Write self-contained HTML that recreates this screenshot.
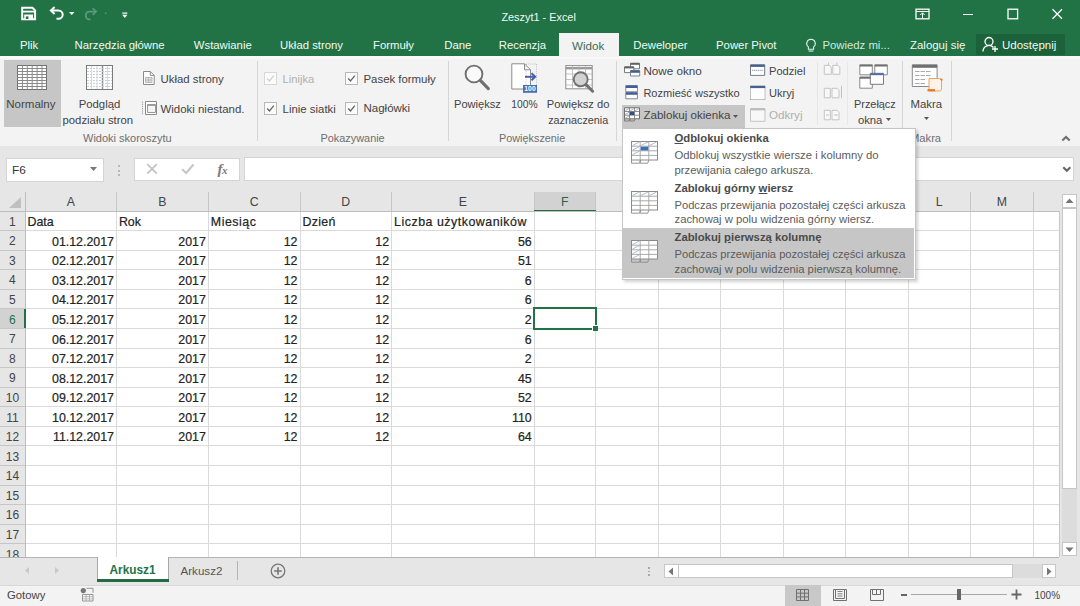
<!DOCTYPE html>
<html><head><meta charset="utf-8"><style>
html,body{margin:0;padding:0;}
body{width:1080px;height:606px;position:relative;overflow:hidden;background:#e6e6e6;font-family:"Liberation Sans", sans-serif;}
.t{position:absolute;white-space:nowrap;}
.r{position:absolute;display:block;}
u{text-decoration:underline;text-underline-offset:1px;}
</style></head><body>
<div class="r" style="left:0.00px;top:0.00px;width:1080.00px;height:56.00px;background:#217346"></div>
<svg class="r" style="left:18px;top:4px" width="22" height="20" viewBox="18 4 22 20"><path d="M22.2 7.7h10.3l2.6 2.6v9h-12.9z" fill="none" stroke="#fff" stroke-width="2"/><path d="M22.2 11.6h12.9" stroke="#fff" stroke-width="1.8"/><path d="M24.2 14.5h8.9v4.8h-8.9z" fill="#fff"/><path d="M25.8 16.4h2.6v2.6h-2.6z" fill="#217346"/></svg>
<svg class="r" style="left:46px;top:4px" width="34" height="20" viewBox="46 4 34 20"><path d="M54.6 6.9L50.9 10.4L54.6 13.9" fill="none" stroke="#fff" stroke-width="2"/><path d="M51.5 10.4H58.5A4.2 4.2 0 0 1 58.5 18.8H56.5" fill="none" stroke="#fff" stroke-width="2"/><path d="M69 12h5.5l-2.75 2.9z" fill="#fff"/></svg>
<svg class="r" style="left:80px;top:4px" width="32" height="20" viewBox="80 4 32 20"><path d="M92.6 8.4L96.2 11.6L92.6 14.8" fill="none" stroke="#5a9a77" stroke-width="1.7"/><path d="M95.6 11.6H89A3.9 3.9 0 0 0 89 19.3H90.5" fill="none" stroke="#5a9a77" stroke-width="1.7"/><circle cx="105.7" cy="13.2" r="1" fill="#4f8f6c"/></svg>
<svg class="r" style="left:118px;top:8px" width="14" height="14" viewBox="118 8 14 14"><path d="M122.3 13.1h5" stroke="#fff" stroke-width="1.2"/><path d="M122.2 14.8h5.2l-2.6 3.3z" fill="#fff"/></svg>
<div class="t" style="left:501.40px;top:12.17px;font-size:10.9px;line-height:10.9px;color:#f2f9f4;">Zeszyt1 - Excel</div>
<svg class="r" style="left:915px;top:8px;" width="15" height="12" viewBox="0 0 15 12"><rect x="1" y="1.2" width="13" height="9.6" fill="none" stroke="#fff" stroke-width="1.3"/><path d="M1 3.5h13" stroke="#fff" stroke-width="1"/><path d="M7.5 10v-5M5.3 7l2.2-2.2 2.2 2.2" fill="none" stroke="#fff" stroke-width="1"/></svg>
<div class="r" style="left:963.00px;top:13.60px;width:10.00px;height:1.30px;background:#fff"></div>
<svg class="r" style="left:1007px;top:8px;" width="12" height="12" viewBox="0 0 12 12"><rect x="1" y="1.2" width="9.6" height="9.6" fill="none" stroke="#fff" stroke-width="1.3"/></svg>
<svg class="r" style="left:1051px;top:8px;" width="13" height="12" viewBox="0 0 13 12"><path d="M1.5 1.2l9.5 9.6M11 1.2l-9.5 9.6" stroke="#fff" stroke-width="1.3"/></svg>
<div class="r" style="left:559.00px;top:33.00px;width:60.00px;height:23.50px;background:#f3f3f3"></div>
<div class="t" style="left:20.00px;top:39.89px;font-size:11.35px;line-height:11.35px;color:#f2f9f4;">Plik</div>
<div class="t" style="left:74.50px;top:39.89px;font-size:11.35px;line-height:11.35px;color:#f2f9f4;">Narzędzia główne</div>
<div class="t" style="left:193.75px;top:39.89px;font-size:11.35px;line-height:11.35px;color:#f2f9f4;">Wstawianie</div>
<div class="t" style="left:280.00px;top:39.89px;font-size:11.35px;line-height:11.35px;color:#f2f9f4;">Układ strony</div>
<div class="t" style="left:373.00px;top:39.89px;font-size:11.35px;line-height:11.35px;color:#f2f9f4;">Formuły</div>
<div class="t" style="left:444.25px;top:39.89px;font-size:11.35px;line-height:11.35px;color:#f2f9f4;">Dane</div>
<div class="t" style="left:498.75px;top:39.89px;font-size:11.35px;line-height:11.35px;color:#f2f9f4;">Recenzja</div>
<div class="t" style="left:633.25px;top:39.89px;font-size:11.35px;line-height:11.35px;color:#f2f9f4;">Deweloper</div>
<div class="t" style="left:716.00px;top:39.89px;font-size:11.35px;line-height:11.35px;color:#f2f9f4;">Power Pivot</div>
<div class="t" style="left:572.00px;top:39.68px;font-size:11.6px;line-height:11.6px;color:#3f6b55;">Widok</div>
<svg class="r" style="left:805px;top:38px;" width="12" height="15" viewBox="0 0 12 15"><path d="M6 1.2a4.3 4.3 0 0 0-2.6 7.7v2.3h5.2v-2.3a4.3 4.3 0 0 0-2.6-7.7z" fill="none" stroke="#dfeee5" stroke-width="1.1"/><path d="M3.6 13h4.8" stroke="#dfeee5" stroke-width="1.1"/></svg>
<div class="t" style="left:822.40px;top:39.89px;font-size:11.35px;line-height:11.35px;color:#d2e6da;">Powiedz mi...</div>
<div class="t" style="left:910.00px;top:39.81px;font-size:11.45px;line-height:11.45px;color:#f2f9f4;">Zaloguj się</div>
<div class="r" style="left:976.00px;top:34.00px;width:88.50px;height:20.50px;background:#1b6139"></div>
<svg class="r" style="left:982px;top:36px;" width="17" height="17" viewBox="0 0 17 17"><circle cx="7" cy="5.5" r="4" fill="none" stroke="#fff" stroke-width="1.3"/><path d="M1 15.5a6 6 0 0 1 10.5-4" fill="none" stroke="#fff" stroke-width="1.3"/><path d="M13 10v6M10 13h6" stroke="#fff" stroke-width="1.3"/></svg>
<div class="t" style="left:1002.00px;top:39.77px;font-size:11.5px;line-height:11.5px;color:#f2f9f4;">Udostępnij</div>
<div class="r" style="left:0.00px;top:56.00px;width:1080.00px;height:90.00px;background:#f3f3f3;border-bottom:1px solid #d5d5d5"></div>
<div class="r" style="left:0.00px;top:56.00px;width:1080.00px;height:3.00px;background:#f7f8f7"></div>
<div class="r" style="left:559.00px;top:56.00px;width:60.00px;height:1.00px;background:#f3f3f3"></div>
<div class="r" style="left:256.70px;top:61.00px;width:1.00px;height:80.00px;background:#d6d6d6"></div>
<div class="r" style="left:447.60px;top:61.00px;width:1.00px;height:80.00px;background:#d6d6d6"></div>
<div class="r" style="left:616.00px;top:61.00px;width:1.00px;height:80.00px;background:#d6d6d6"></div>
<div class="r" style="left:817.40px;top:62.00px;width:1.00px;height:63.00px;background:#e6e6e6"></div>
<div class="r" style="left:846.50px;top:62.00px;width:1.00px;height:63.00px;background:#e8e8e8"></div>
<div class="r" style="left:901.60px;top:61.00px;width:1.00px;height:80.00px;background:#d6d6d6"></div>
<div class="r" style="left:951.30px;top:61.00px;width:1.00px;height:80.00px;background:#d6d6d6"></div>
<div class="r" style="left:3.50px;top:60.00px;width:57.00px;height:67.00px;background:#c6c6c6"></div>
<svg class="r" style="left:15px;top:63px" width="34" height="29" viewBox="15 63 34 29"><rect x="17.5" y="65.5" width="29" height="24" fill="#fff" stroke="#707070"/><path d="M22.40 65.5V89.5" stroke="#8a8a8a" stroke-width="1"/><path d="M27.30 65.5V89.5" stroke="#8a8a8a" stroke-width="1"/><path d="M32.20 65.5V89.5" stroke="#8a8a8a" stroke-width="1"/><path d="M37.10 65.5V89.5" stroke="#8a8a8a" stroke-width="1"/><path d="M42.00 65.5V89.5" stroke="#8a8a8a" stroke-width="1"/><path d="M17.5 68.50H46.5" stroke="#8a8a8a" stroke-width="1"/><path d="M17.5 71.50H46.5" stroke="#8a8a8a" stroke-width="1"/><path d="M17.5 74.50H46.5" stroke="#8a8a8a" stroke-width="1"/><path d="M17.5 77.50H46.5" stroke="#8a8a8a" stroke-width="1"/><path d="M17.5 80.50H46.5" stroke="#8a8a8a" stroke-width="1"/><path d="M17.5 83.50H46.5" stroke="#8a8a8a" stroke-width="1"/><path d="M17.5 86.50H46.5" stroke="#8a8a8a" stroke-width="1"/></svg>
<div class="t" style="left:6.30px;top:98.97px;font-size:11.5px;line-height:11.5px;color:#444;">Normalny</div>
<svg class="r" style="left:84px;top:63px" width="31" height="29" viewBox="84 63 31 29"><rect x="86.5" y="65.5" width="26" height="24" fill="#fff" stroke="#7a7a7a"/><path d="M102.5 65.5v24" stroke="#8a8a8a" stroke-width="1.4"/><path d="M87 68.5h25" stroke="#c4cbd6" stroke-width="0.9" stroke-dasharray="2 1"/><path d="M87 71.5h25" stroke="#c4cbd6" stroke-width="0.9" stroke-dasharray="2 1"/><path d="M87 74.5h25" stroke="#c4cbd6" stroke-width="0.9" stroke-dasharray="2 1"/><path d="M87 77.5h25" stroke="#c4cbd6" stroke-width="0.9" stroke-dasharray="2 1"/><path d="M87 80.5h25" stroke="#c4cbd6" stroke-width="0.9" stroke-dasharray="2 1"/><path d="M87 83.5h25" stroke="#c4cbd6" stroke-width="0.9" stroke-dasharray="2 1"/><path d="M87 86.5h25" stroke="#c4cbd6" stroke-width="0.9" stroke-dasharray="2 1"/><path d="M91.5 66v23M97 66v23M107.5 66v23" stroke="#d0d5dd" stroke-width="0.9"/></svg>
<div class="t" style="left:78.70px;top:99.09px;font-size:11.35px;line-height:11.35px;color:#444;">Podgląd</div>
<div class="t" style="left:62.50px;top:114.89px;font-size:11.35px;line-height:11.35px;color:#444;">podziału stron</div>
<svg class="r" style="left:140px;top:69px" width="18" height="19" viewBox="140 69 18 19"><path d="M143.5 71.5H150.3L154.2 75.4V84.5H143.5Z" fill="#fff" stroke="#8a8a8a"/><path d="M150.3 71.5V75.4H154.2" fill="none" stroke="#8a8a8a"/><path d="M145.5 77.5h6.5v5h-6.5z" fill="#e4e4e4" stroke="#aaa" stroke-width="0.8"/><path d="M145.5 80h6.5M148.7 77.5v5" stroke="#aaa" stroke-width="0.8"/></svg>
<div class="t" style="left:160.50px;top:73.65px;font-size:11.4px;line-height:11.4px;color:#444;">Układ strony</div>
<svg class="r" style="left:140px;top:99px" width="19" height="18" viewBox="140 99 19 18"><path d="M142.5 101.5V115" stroke="#999" stroke-dasharray="1.2 1"/><path d="M145.5 101.5h11v13h-11z" fill="#fff" stroke="#8a8a8a"/><path d="M147.5 104.5h8v8h-8z" fill="#f4f4f4" stroke="#999"/><path d="M147.5 105.2h8" stroke="#999" stroke-width="1.4"/></svg>
<div class="t" style="left:160.50px;top:103.51px;font-size:11.45px;line-height:11.45px;color:#444;">Widoki niestand.</div>
<div class="t" style="left:83.00px;top:132.59px;font-size:11.0px;line-height:11.0px;color:#6e6e6e;">Widoki skoroszytu</div>
<svg class="r" style="left:264px;top:72px;" width="13" height="13" viewBox="0 0 13 13"><rect x="0.5" y="0.5" width="12" height="12" fill="#fbfbfb" stroke="#d8d8d8"/><path d="M3.2 6.5l2.3 2.5 4.3-5.3" fill="none" stroke="#d0d0d0" stroke-width="1.3"/></svg>
<div class="t" style="left:282.60px;top:73.82px;font-size:11.2px;line-height:11.2px;color:#b0b0b0;">Linijka</div>
<svg class="r" style="left:345px;top:72px;" width="13" height="13" viewBox="0 0 13 13"><rect x="0.5" y="0.5" width="12" height="12" fill="#fbfbfb" stroke="#b8b8b8"/><path d="M3.2 6.5l2.3 2.5 4.3-5.3" fill="none" stroke="#666" stroke-width="1.3"/></svg>
<div class="t" style="left:363.50px;top:73.65px;font-size:11.4px;line-height:11.4px;color:#444;">Pasek formuły</div>
<svg class="r" style="left:264px;top:101.5px;" width="13" height="13" viewBox="0 0 13 13"><rect x="0.5" y="0.5" width="12" height="12" fill="#fbfbfb" stroke="#b8b8b8"/><path d="M3.2 6.5l2.3 2.5 4.3-5.3" fill="none" stroke="#666" stroke-width="1.3"/></svg>
<div class="t" style="left:282.60px;top:103.55px;font-size:11.4px;line-height:11.4px;color:#444;">Linie siatki</div>
<svg class="r" style="left:345px;top:101.5px;" width="13" height="13" viewBox="0 0 13 13"><rect x="0.5" y="0.5" width="12" height="12" fill="#fbfbfb" stroke="#b8b8b8"/><path d="M3.2 6.5l2.3 2.5 4.3-5.3" fill="none" stroke="#666" stroke-width="1.3"/></svg>
<div class="t" style="left:363.50px;top:103.47px;font-size:11.5px;line-height:11.5px;color:#444;">Nagłówki</div>
<div class="t" style="left:320.50px;top:133.07px;font-size:10.9px;line-height:10.9px;color:#6e6e6e;">Pokazywanie</div>
<svg class="r" style="left:460px;top:60px" width="34" height="34" viewBox="460 60 34 34"><circle cx="474" cy="74" r="8.4" fill="#fafafa" stroke="#707070" stroke-width="1.9"/><path d="M480.3 80.3L488.3 88.6" stroke="#707070" stroke-width="3.2" stroke-linecap="round"/></svg>
<div class="t" style="left:454.00px;top:99.30px;font-size:11.1px;line-height:11.1px;color:#444;">Powiększ</div>
<svg class="r" style="left:508px;top:60px" width="32" height="35" viewBox="508 60 32 35"><path d="M511.8 63.8H524.5L530.5 69.8V89H511.8Z" fill="#fff" stroke="#8c8c8c"/><path d="M524.5 63.8V69.8H530.5" fill="none" stroke="#8c8c8c"/><path d="M526 64v24M536.5 64v21" stroke="#b0b0b0" stroke-width="0.8" stroke-dasharray="1 1.2"/><path d="M526 64h10.5" stroke="#b0b0b0" stroke-width="0.8" stroke-dasharray="1 1.2"/><path d="M525 76.8H535" stroke="#3e5fae" stroke-width="1.9"/><path d="M531.5 73.3L535.2 76.8L531.5 80.3" fill="none" stroke="#3e5fae" stroke-width="1.9"/><rect x="523" y="85" width="14" height="7.8" fill="#4a6fb5"/><text x="530" y="91.3" font-size="6.8" font-weight="bold" fill="#fff" text-anchor="middle" font-family="Liberation Sans">100</text></svg>
<div class="t" style="left:511.30px;top:99.98px;font-size:10.3px;line-height:10.3px;color:#444;">100%</div>
<svg class="r" style="left:562px;top:62px" width="35" height="33" viewBox="562 62 35 33"><rect x="565.8" y="65.6" width="26.4" height="23.2" fill="#fff" stroke="#8c8c8c"/><path d="M566 68.2h26" stroke="#9a9a9a" stroke-width="2.4"/><path d="M566 74h26M566 79.5h26M566 85h26M572.5 66v23M579 66v23M585.5 66v23" stroke="#b4b4b4" stroke-width="0.8"/><circle cx="580.7" cy="79.3" r="7" fill="#d2d2d2" stroke="#707070" stroke-width="1.9"/><path d="M586 84.6L592.6 91.2" stroke="#707070" stroke-width="3" stroke-linecap="round"/></svg>
<div class="t" style="left:546.80px;top:99.26px;font-size:11.15px;line-height:11.15px;color:#444;">Powiększ do</div>
<div class="t" style="left:548.20px;top:115.36px;font-size:10.8px;line-height:10.8px;color:#444;">zaznaczenia</div>
<div class="t" style="left:499.00px;top:133.02px;font-size:10.85px;line-height:10.85px;color:#6e6e6e;">Powiększenie</div>
<svg class="r" style="left:622px;top:61px" width="20" height="17" viewBox="622 61 20 17"><path d="M630.5 63.2h9v5.6h-9z" fill="#fff" stroke="#7a7a7a"/><path d="M630.5 63.9h9" stroke="#606060" stroke-width="1.8"/><path d="M624.5 66.8h9.3v5.8h-9.3z" fill="#fff" stroke="#7a7a7a"/><path d="M624.5 67.5h9.3" stroke="#606060" stroke-width="1.8"/><path d="M630.5 70.6h9.2v5.4h-9.2z" fill="#fff" stroke="#7a8596"/><path d="M630.5 71.6h9.2" stroke="#3f5f96" stroke-width="2.4"/></svg>
<div class="t" style="left:643.40px;top:65.10px;font-size:11.7px;line-height:11.7px;color:#444;">Nowe okno</div>
<svg class="r" style="left:623px;top:83px" width="17" height="18" viewBox="623 83 17 18"><path d="M625.8 85.6h11.6v6.2h-11.6z M625.8 92.4h11.6v6.4h-11.6z" fill="#fff" stroke="#7f8794"/><path d="M625.8 86.8h11.6M625.8 93.6h11.6" stroke="#3f5f96" stroke-width="2.4"/></svg>
<div class="t" style="left:643.40px;top:88.45px;font-size:11.05px;line-height:11.05px;color:#444;">Rozmieść wszystko</div>
<div class="r" style="left:621.70px;top:104.60px;width:123.00px;height:23.00px;background:#c6c6c6"></div>
<svg class="r" style="left:622px;top:105px" width="20" height="19" viewBox="622 105 20 19"><path d="M624.5 107.8h15v11h-15z" fill="#fff" stroke="#6e6e6e"/><path d="M624.5 111.5h15M624.5 115.2h15M629.5 107.8v11M634.5 107.8v11" stroke="#808080" stroke-width="0.9"/><path d="M630 111.8h4.2v3.2H630z" fill="#36507e"/><path d="M625 111l4-2.5M630 111l4-2.5M635 111l4-2.5M625 114.7l4-2.5M625 118.4l4-2.5" stroke="#9aa6b8" stroke-width="0.8"/><path d="M624.5 118.8v2.2h4.8l.7-2.2M630 118.8v2.2h4.3l.7-2.2" fill="none" stroke="#777" stroke-width="0.9"/></svg>
<div class="t" style="left:643.40px;top:109.38px;font-size:11.6px;line-height:11.6px;color:#444;">Zablokuj okienka</div>
<svg class="r" style="left:733px;top:115px;" width="6" height="4" viewBox="0 0 6 4"><path d="M0 0h5l-2.5 3z" fill="#555"/></svg>
<svg class="r" style="left:748px;top:62px" width="20" height="17" viewBox="748 62 20 17"><path d="M750.5 64.8h14.2v10.6h-14.2z" fill="#fff" stroke="#737b88"/><path d="M750.5 65.8h14.2" stroke="#46608f" stroke-width="2.2"/><path d="M752.3 70.3h10.8" stroke="#5a7096" stroke-dasharray="1 1"/></svg>
<div class="t" style="left:769.00px;top:65.60px;font-size:11.1px;line-height:11.1px;color:#444;">Podziel</div>
<svg class="r" style="left:748px;top:84px" width="20" height="18" viewBox="748 84 20 18"><path d="M750.5 86.4h14.5v13h-14.5z" fill="#fff" opacity="0.8"/><path d="M750.5 86.5v13M765 86.5v13M750.5 99.5h14.5" stroke="#8a8a8a" stroke-dasharray="1 1" fill="none"/><path d="M750.2 86.9h15" stroke="#46608f" stroke-width="2.4"/></svg>
<div class="t" style="left:769.00px;top:88.40px;font-size:11.1px;line-height:11.1px;color:#444;">Ukryj</div>
<svg class="r" style="left:748px;top:106px" width="20" height="18" viewBox="748 106 20 18"><path d="M750.5 108.5h14.5v12.8h-14.5z" fill="#f8f8f8" stroke="#c4c4c4"/><path d="M750.5 109.4h14.5" stroke="#bdbdbd" stroke-width="2"/></svg>
<div class="t" style="left:769.00px;top:109.38px;font-size:11.6px;line-height:11.6px;color:#b0b0b0;">Odkryj</div>
<svg class="r" style="left:820px;top:60px" width="24" height="64" viewBox="820 60 24 64"><path d="M824.3 65.3h5l2 2v7h-7z M832.8 65.3h5l2 2v7h-7z" fill="#f8f8f8" stroke="#c4c4c4"/><path d="M828.5 62.5v3M836.8 62.5v3" stroke="#c8c8c8"/><path d="M824.3 88.3h6v9.5h-6z M832 88.3h5l2 2v7.5h-7z" fill="#f8f8f8" stroke="#c4c4c4"/><path d="M841.5 86v12" stroke="#c0c0c0"/><path d="M824.3 110.3h6v9.5h-6z M832 110.3h5l2 2v7.5h-7z" fill="#f8f8f8" stroke="#c4c4c4"/><path d="M826 115h3M834 115h4" stroke="#c0c0c0"/></svg>
<svg class="r" style="left:856px;top:61px" width="36" height="31" viewBox="856 61 36 31"><path d="M859.8 64.8h12.5v10h-12.5z M874.8 64.8h12.5v10h-12.5z M859.8 77h12.5v11.2h-12.5z" fill="#fff" stroke="#8a8a8a"/><path d="M859.8 65.6h12.5M874.8 65.6h12.5M859.8 77.8h12.5" stroke="#707070" stroke-width="1.8"/><path d="M870.3 73.3h13.2v11h-13.2z" fill="#fff" stroke="#7a7a7a"/><path d="M870.3 74.2h13.2" stroke="#4a6fa8" stroke-width="2"/></svg>
<div class="t" style="left:854.00px;top:99.47px;font-size:10.9px;line-height:10.9px;color:#444;">Przełącz</div>
<div class="t" style="left:857.90px;top:114.73px;font-size:11.3px;line-height:11.3px;color:#444;">okna</div>
<svg class="r" style="left:886px;top:118px;" width="6" height="4" viewBox="0 0 6 4"><path d="M0 0h5l-2.5 3z" fill="#555"/></svg>
<svg class="r" style="left:909px;top:61px" width="37" height="33" viewBox="909 61 37 33"><path d="M912.3 64.8h24.8v21.7h-24.8z" fill="#fff" stroke="#8a8a8a"/><path d="M912.3 66.3h24.8" stroke="#707070" stroke-width="3"/><path d="M915 71.5h4.5M920.5 71.5h4.5M926 71.5h4.5M915 75.5h4.5M920.5 75.5h4.5M926 75.5h4.5M915 79.5h4.5M920.5 79.5h4.5M915 83.5h4.5M920.5 83.5h4.5" stroke="#a0a0a0" stroke-width="0.9"/><path d="M929 78.5h10.5a2 2 0 0 1 2 2v8.5a2 2 0 0 1-2 2h-10.5z" fill="#fdf3e6" stroke="#e8a567" stroke-width="1"/><path d="M927.5 90.2h7.5" stroke="#e07b29" stroke-width="2.2"/><path d="M940.5 78.8l2 1.5" stroke="#e07b29" stroke-width="1.5"/></svg>
<div class="t" style="left:910.50px;top:99.05px;font-size:11.4px;line-height:11.4px;color:#444;">Makra</div>
<svg class="r" style="left:923.5px;top:117px;" width="6" height="4" viewBox="0 0 6 4"><path d="M0 0h5l-2.5 3z" fill="#555"/></svg>
<div class="t" style="left:910.00px;top:132.72px;font-size:11.2px;line-height:11.2px;color:#6e6e6e;">Makra</div>
<svg class="r" style="left:1058px;top:132px" width="16" height="12" viewBox="1058 132 16 12"><path d="M1062.3 140.6L1066 136.9L1069.7 140.6" fill="none" stroke="#707070" stroke-width="2.1"/></svg>
<div class="r" style="left:0.00px;top:146.00px;width:1080.00px;height:46.00px;background:#e6e6e6"></div>
<div class="r" style="left:5.50px;top:157.50px;width:98.00px;height:24.50px;background:#fff;border:1px solid #d4d4d4;box-sizing:border-box"></div>
<div class="t" style="left:12.00px;top:165.21px;font-size:11.8px;line-height:11.8px;color:#333;">F6</div>
<svg class="r" style="left:90px;top:167px;" width="8" height="5" viewBox="0 0 8 5"><path d="M0 0h7l-3.5 4z" fill="#777"/></svg>
<div class="r" style="left:118.20px;top:165.30px;width:2.00px;height:2.00px;background:#a8a8a8;border-radius:1px"></div>
<div class="r" style="left:118.20px;top:169.50px;width:2.00px;height:2.00px;background:#a8a8a8;border-radius:1px"></div>
<div class="r" style="left:118.20px;top:173.70px;width:2.00px;height:2.00px;background:#a8a8a8;border-radius:1px"></div>
<div class="r" style="left:134.40px;top:157.70px;width:105.90px;height:23.80px;background:#fff;border:1px solid #d4d4d4;box-sizing:border-box"></div>
<svg class="r" style="left:144px;top:160px" width="18" height="19" viewBox="144 160 18 19"><path d="M147.3 164.2l9.5 9.5M156.8 164.2l-9.5 9.5" stroke="#c2c2c2" stroke-width="1.7"/></svg>
<svg class="r" style="left:180px;top:160px" width="16" height="19" viewBox="180 160 16 19"><path d="M182.2 169.2l4 3.8 7.3-8.5" fill="none" stroke="#c6c6c6" stroke-width="2"/></svg>
<div class="t" style="left:217.5px;top:159.5px;font-family:'Liberation Serif',serif;font-style:italic;font-weight:bold;font-size:15px;line-height:18px;color:#7a7a7a">f<span style="font-size:11px;margin-left:-0.5px">x</span></div>
<div class="r" style="left:244.40px;top:157.40px;width:830.00px;height:24.00px;background:#fff;border:1px solid #d4d4d4;box-sizing:border-box"></div>
<svg class="r" style="left:1058px;top:162px" width="16" height="14" viewBox="1058 162 16 14"><path d="M1063.3 167.2L1066.8 170.7L1070.3 167.2" fill="none" stroke="#666" stroke-width="2.1"/></svg>
<div class="r" style="left:0.00px;top:192.00px;width:1059.00px;height:19.00px;background:#e6e6e6"></div>
<div class="r" style="left:0.00px;top:211.00px;width:25.00px;height:346.00px;background:#e6e6e6"></div>
<div class="r" style="left:25.00px;top:211.00px;width:1034.00px;height:346.00px;background:#fff"></div>
<div class="r" style="left:1059.00px;top:192.00px;width:21.00px;height:365.00px;background:#e6e6e6"></div>
<div class="r" style="left:116.00px;top:211.00px;width:1.00px;height:346.00px;background:#dadada"></div>
<div class="r" style="left:116.00px;top:192.00px;width:1.00px;height:19.00px;background:#c6c6c6"></div>
<div class="r" style="left:207.80px;top:211.00px;width:1.00px;height:346.00px;background:#dadada"></div>
<div class="r" style="left:207.80px;top:192.00px;width:1.00px;height:19.00px;background:#c6c6c6"></div>
<div class="r" style="left:299.50px;top:211.00px;width:1.00px;height:346.00px;background:#dadada"></div>
<div class="r" style="left:299.50px;top:192.00px;width:1.00px;height:19.00px;background:#c6c6c6"></div>
<div class="r" style="left:391.10px;top:211.00px;width:1.00px;height:346.00px;background:#dadada"></div>
<div class="r" style="left:391.10px;top:192.00px;width:1.00px;height:19.00px;background:#c6c6c6"></div>
<div class="r" style="left:533.75px;top:211.00px;width:1.00px;height:346.00px;background:#dadada"></div>
<div class="r" style="left:533.75px;top:192.00px;width:1.00px;height:19.00px;background:#c6c6c6"></div>
<div class="r" style="left:595.00px;top:211.00px;width:1.00px;height:346.00px;background:#dadada"></div>
<div class="r" style="left:595.00px;top:192.00px;width:1.00px;height:19.00px;background:#c6c6c6"></div>
<div class="r" style="left:657.50px;top:211.00px;width:1.00px;height:346.00px;background:#dadada"></div>
<div class="r" style="left:657.50px;top:192.00px;width:1.00px;height:19.00px;background:#c6c6c6"></div>
<div class="r" style="left:720.00px;top:211.00px;width:1.00px;height:346.00px;background:#dadada"></div>
<div class="r" style="left:720.00px;top:192.00px;width:1.00px;height:19.00px;background:#c6c6c6"></div>
<div class="r" style="left:782.50px;top:211.00px;width:1.00px;height:346.00px;background:#dadada"></div>
<div class="r" style="left:782.50px;top:192.00px;width:1.00px;height:19.00px;background:#c6c6c6"></div>
<div class="r" style="left:845.00px;top:211.00px;width:1.00px;height:346.00px;background:#dadada"></div>
<div class="r" style="left:845.00px;top:192.00px;width:1.00px;height:19.00px;background:#c6c6c6"></div>
<div class="r" style="left:907.50px;top:211.00px;width:1.00px;height:346.00px;background:#dadada"></div>
<div class="r" style="left:907.50px;top:192.00px;width:1.00px;height:19.00px;background:#c6c6c6"></div>
<div class="r" style="left:970.00px;top:211.00px;width:1.00px;height:346.00px;background:#dadada"></div>
<div class="r" style="left:970.00px;top:192.00px;width:1.00px;height:19.00px;background:#c6c6c6"></div>
<div class="r" style="left:1032.50px;top:211.00px;width:1.00px;height:346.00px;background:#dadada"></div>
<div class="r" style="left:1032.50px;top:192.00px;width:1.00px;height:19.00px;background:#c6c6c6"></div>
<div class="r" style="left:25.00px;top:230.08px;width:1034.00px;height:1.00px;background:#dadada"></div>
<div class="r" style="left:0.00px;top:230.08px;width:25.00px;height:1.00px;background:#c6c6c6"></div>
<div class="r" style="left:25.00px;top:249.66px;width:1034.00px;height:1.00px;background:#dadada"></div>
<div class="r" style="left:0.00px;top:249.66px;width:25.00px;height:1.00px;background:#c6c6c6"></div>
<div class="r" style="left:25.00px;top:269.24px;width:1034.00px;height:1.00px;background:#dadada"></div>
<div class="r" style="left:0.00px;top:269.24px;width:25.00px;height:1.00px;background:#c6c6c6"></div>
<div class="r" style="left:25.00px;top:288.82px;width:1034.00px;height:1.00px;background:#dadada"></div>
<div class="r" style="left:0.00px;top:288.82px;width:25.00px;height:1.00px;background:#c6c6c6"></div>
<div class="r" style="left:25.00px;top:308.40px;width:1034.00px;height:1.00px;background:#dadada"></div>
<div class="r" style="left:0.00px;top:308.40px;width:25.00px;height:1.00px;background:#c6c6c6"></div>
<div class="r" style="left:25.00px;top:327.98px;width:1034.00px;height:1.00px;background:#dadada"></div>
<div class="r" style="left:0.00px;top:327.98px;width:25.00px;height:1.00px;background:#c6c6c6"></div>
<div class="r" style="left:25.00px;top:347.56px;width:1034.00px;height:1.00px;background:#dadada"></div>
<div class="r" style="left:0.00px;top:347.56px;width:25.00px;height:1.00px;background:#c6c6c6"></div>
<div class="r" style="left:25.00px;top:367.14px;width:1034.00px;height:1.00px;background:#dadada"></div>
<div class="r" style="left:0.00px;top:367.14px;width:25.00px;height:1.00px;background:#c6c6c6"></div>
<div class="r" style="left:25.00px;top:386.72px;width:1034.00px;height:1.00px;background:#dadada"></div>
<div class="r" style="left:0.00px;top:386.72px;width:25.00px;height:1.00px;background:#c6c6c6"></div>
<div class="r" style="left:25.00px;top:406.30px;width:1034.00px;height:1.00px;background:#dadada"></div>
<div class="r" style="left:0.00px;top:406.30px;width:25.00px;height:1.00px;background:#c6c6c6"></div>
<div class="r" style="left:25.00px;top:425.88px;width:1034.00px;height:1.00px;background:#dadada"></div>
<div class="r" style="left:0.00px;top:425.88px;width:25.00px;height:1.00px;background:#c6c6c6"></div>
<div class="r" style="left:25.00px;top:445.46px;width:1034.00px;height:1.00px;background:#dadada"></div>
<div class="r" style="left:0.00px;top:445.46px;width:25.00px;height:1.00px;background:#c6c6c6"></div>
<div class="r" style="left:25.00px;top:465.04px;width:1034.00px;height:1.00px;background:#dadada"></div>
<div class="r" style="left:0.00px;top:465.04px;width:25.00px;height:1.00px;background:#c6c6c6"></div>
<div class="r" style="left:25.00px;top:484.62px;width:1034.00px;height:1.00px;background:#dadada"></div>
<div class="r" style="left:0.00px;top:484.62px;width:25.00px;height:1.00px;background:#c6c6c6"></div>
<div class="r" style="left:25.00px;top:504.20px;width:1034.00px;height:1.00px;background:#dadada"></div>
<div class="r" style="left:0.00px;top:504.20px;width:25.00px;height:1.00px;background:#c6c6c6"></div>
<div class="r" style="left:25.00px;top:523.78px;width:1034.00px;height:1.00px;background:#dadada"></div>
<div class="r" style="left:0.00px;top:523.78px;width:25.00px;height:1.00px;background:#c6c6c6"></div>
<div class="r" style="left:25.00px;top:543.36px;width:1034.00px;height:1.00px;background:#dadada"></div>
<div class="r" style="left:0.00px;top:543.36px;width:25.00px;height:1.00px;background:#c6c6c6"></div>
<div class="r" style="left:0.00px;top:210.50px;width:1059.00px;height:1.00px;background:#bdbdbd"></div>
<div class="r" style="left:24.50px;top:192.00px;width:1.00px;height:365.00px;background:#bdbdbd"></div>
<div class="r" style="left:1058.50px;top:211.00px;width:1.00px;height:346.00px;background:#c6c6c6"></div>
<div class="r" style="left:25.00px;top:556.50px;width:1034.00px;height:1.00px;background:#c6c6c6"></div>
<svg class="r" style="left:8px;top:197px;" width="14" height="12" viewBox="0 0 14 12"><path d="M13 0v11H1z" fill="#c0c0c0"/></svg>
<div class="r" style="left:534.75px;top:192.00px;width:60.25px;height:19.00px;background:#d2d2d2"></div>
<div class="r" style="left:534.25px;top:209.60px;width:61.25px;height:1.60px;background:#2a6b48"></div>
<div class="r" style="left:0.00px;top:309.40px;width:24.50px;height:18.58px;background:#d2d2d2"></div>
<div class="r" style="left:23.50px;top:308.90px;width:2.00px;height:19.58px;background:#217346"></div>
<div class="t" style="left:40.75px;width:60px;text-align:center;top:195.59px;font-size:12.3px;line-height:12.3px;color:#444;">A</div>
<div class="t" style="left:132.40px;width:60px;text-align:center;top:195.59px;font-size:12.3px;line-height:12.3px;color:#444;">B</div>
<div class="t" style="left:224.15px;width:60px;text-align:center;top:195.59px;font-size:12.3px;line-height:12.3px;color:#444;">C</div>
<div class="t" style="left:315.80px;width:60px;text-align:center;top:195.59px;font-size:12.3px;line-height:12.3px;color:#444;">D</div>
<div class="t" style="left:432.93px;width:60px;text-align:center;top:195.59px;font-size:12.3px;line-height:12.3px;color:#444;">E</div>
<div class="t" style="left:534.88px;width:60px;text-align:center;top:195.59px;font-size:12.3px;line-height:12.3px;color:#2e5e45;">F</div>
<div class="t" style="left:596.75px;width:60px;text-align:center;top:195.59px;font-size:12.3px;line-height:12.3px;color:#444;">G</div>
<div class="t" style="left:659.25px;width:60px;text-align:center;top:195.59px;font-size:12.3px;line-height:12.3px;color:#444;">H</div>
<div class="t" style="left:721.75px;width:60px;text-align:center;top:195.59px;font-size:12.3px;line-height:12.3px;color:#444;">I</div>
<div class="t" style="left:784.25px;width:60px;text-align:center;top:195.59px;font-size:12.3px;line-height:12.3px;color:#444;">J</div>
<div class="t" style="left:846.75px;width:60px;text-align:center;top:195.59px;font-size:12.3px;line-height:12.3px;color:#444;">K</div>
<div class="t" style="left:909.25px;width:60px;text-align:center;top:195.59px;font-size:12.3px;line-height:12.3px;color:#444;">L</div>
<div class="t" style="left:971.75px;width:60px;text-align:center;top:195.59px;font-size:12.3px;line-height:12.3px;color:#444;">M</div>
<div class="t" style="left:0.40px;width:24px;text-align:center;top:215.74px;font-size:12px;line-height:12px;color:#444;">1</div>
<div class="t" style="left:0.40px;width:24px;text-align:center;top:235.32px;font-size:12px;line-height:12px;color:#444;">2</div>
<div class="t" style="left:0.40px;width:24px;text-align:center;top:254.90px;font-size:12px;line-height:12px;color:#444;">3</div>
<div class="t" style="left:0.40px;width:24px;text-align:center;top:274.48px;font-size:12px;line-height:12px;color:#444;">4</div>
<div class="t" style="left:0.40px;width:24px;text-align:center;top:294.06px;font-size:12px;line-height:12px;color:#444;">5</div>
<div class="t" style="left:0.40px;width:24px;text-align:center;top:313.64px;font-size:12px;line-height:12px;color:#217346;">6</div>
<div class="t" style="left:0.40px;width:24px;text-align:center;top:333.22px;font-size:12px;line-height:12px;color:#444;">7</div>
<div class="t" style="left:0.40px;width:24px;text-align:center;top:352.80px;font-size:12px;line-height:12px;color:#444;">8</div>
<div class="t" style="left:0.40px;width:24px;text-align:center;top:372.38px;font-size:12px;line-height:12px;color:#444;">9</div>
<div class="t" style="left:0.40px;width:24px;text-align:center;top:391.96px;font-size:12px;line-height:12px;color:#444;">10</div>
<div class="t" style="left:0.40px;width:24px;text-align:center;top:411.54px;font-size:12px;line-height:12px;color:#444;">11</div>
<div class="t" style="left:0.40px;width:24px;text-align:center;top:431.12px;font-size:12px;line-height:12px;color:#444;">12</div>
<div class="t" style="left:0.40px;width:24px;text-align:center;top:450.70px;font-size:12px;line-height:12px;color:#444;">13</div>
<div class="t" style="left:0.40px;width:24px;text-align:center;top:470.28px;font-size:12px;line-height:12px;color:#444;">14</div>
<div class="t" style="left:0.40px;width:24px;text-align:center;top:489.86px;font-size:12px;line-height:12px;color:#444;">15</div>
<div class="t" style="left:0.40px;width:24px;text-align:center;top:509.44px;font-size:12px;line-height:12px;color:#444;">16</div>
<div class="t" style="left:0.40px;width:24px;text-align:center;top:529.02px;font-size:12px;line-height:12px;color:#444;">17</div>
<div class="t" style="left:0.40px;width:24px;text-align:center;top:548.60px;font-size:12px;line-height:12px;color:#444;">18</div>
<div class="t" style="left:27.50px;top:215.50px;font-size:12.4px;line-height:12.4px;color:#222;-webkit-text-stroke:0.2px #222;letter-spacing:0px;">Data</div>
<div class="t" style="left:119.00px;top:215.50px;font-size:12.4px;line-height:12.4px;color:#222;-webkit-text-stroke:0.2px #222;letter-spacing:-0.1px;">Rok</div>
<div class="t" style="left:210.80px;top:215.50px;font-size:12.4px;line-height:12.4px;color:#222;-webkit-text-stroke:0.2px #222;letter-spacing:0.53px;">Miesiąc</div>
<div class="t" style="left:302.50px;top:215.50px;font-size:12.4px;line-height:12.4px;color:#222;-webkit-text-stroke:0.2px #222;letter-spacing:0.31px;">Dzień</div>
<div class="t" style="left:394.10px;top:215.50px;font-size:12.4px;line-height:12.4px;color:#222;-webkit-text-stroke:0.2px #222;letter-spacing:0.51px;">Liczba użytkowaników</div>
<div class="t" style="right:966.00px;top:235.68px;font-size:12.4px;line-height:12.4px;color:#222;-webkit-text-stroke:0.2px #222;">01.12.2017</div>
<div class="t" style="right:874.20px;top:235.68px;font-size:12.4px;line-height:12.4px;color:#222;-webkit-text-stroke:0.2px #222;">2017</div>
<div class="t" style="right:782.50px;top:235.68px;font-size:12.4px;line-height:12.4px;color:#222;-webkit-text-stroke:0.2px #222;">12</div>
<div class="t" style="right:690.90px;top:235.68px;font-size:12.4px;line-height:12.4px;color:#222;-webkit-text-stroke:0.2px #222;">12</div>
<div class="t" style="right:548.25px;top:235.68px;font-size:12.4px;line-height:12.4px;color:#222;-webkit-text-stroke:0.2px #222;">56</div>
<div class="t" style="right:966.00px;top:255.26px;font-size:12.4px;line-height:12.4px;color:#222;-webkit-text-stroke:0.2px #222;">02.12.2017</div>
<div class="t" style="right:874.20px;top:255.26px;font-size:12.4px;line-height:12.4px;color:#222;-webkit-text-stroke:0.2px #222;">2017</div>
<div class="t" style="right:782.50px;top:255.26px;font-size:12.4px;line-height:12.4px;color:#222;-webkit-text-stroke:0.2px #222;">12</div>
<div class="t" style="right:690.90px;top:255.26px;font-size:12.4px;line-height:12.4px;color:#222;-webkit-text-stroke:0.2px #222;">12</div>
<div class="t" style="right:548.25px;top:255.26px;font-size:12.4px;line-height:12.4px;color:#222;-webkit-text-stroke:0.2px #222;">51</div>
<div class="t" style="right:966.00px;top:274.84px;font-size:12.4px;line-height:12.4px;color:#222;-webkit-text-stroke:0.2px #222;">03.12.2017</div>
<div class="t" style="right:874.20px;top:274.84px;font-size:12.4px;line-height:12.4px;color:#222;-webkit-text-stroke:0.2px #222;">2017</div>
<div class="t" style="right:782.50px;top:274.84px;font-size:12.4px;line-height:12.4px;color:#222;-webkit-text-stroke:0.2px #222;">12</div>
<div class="t" style="right:690.90px;top:274.84px;font-size:12.4px;line-height:12.4px;color:#222;-webkit-text-stroke:0.2px #222;">12</div>
<div class="t" style="right:548.25px;top:274.84px;font-size:12.4px;line-height:12.4px;color:#222;-webkit-text-stroke:0.2px #222;">6</div>
<div class="t" style="right:966.00px;top:294.42px;font-size:12.4px;line-height:12.4px;color:#222;-webkit-text-stroke:0.2px #222;">04.12.2017</div>
<div class="t" style="right:874.20px;top:294.42px;font-size:12.4px;line-height:12.4px;color:#222;-webkit-text-stroke:0.2px #222;">2017</div>
<div class="t" style="right:782.50px;top:294.42px;font-size:12.4px;line-height:12.4px;color:#222;-webkit-text-stroke:0.2px #222;">12</div>
<div class="t" style="right:690.90px;top:294.42px;font-size:12.4px;line-height:12.4px;color:#222;-webkit-text-stroke:0.2px #222;">12</div>
<div class="t" style="right:548.25px;top:294.42px;font-size:12.4px;line-height:12.4px;color:#222;-webkit-text-stroke:0.2px #222;">6</div>
<div class="t" style="right:966.00px;top:314.00px;font-size:12.4px;line-height:12.4px;color:#222;-webkit-text-stroke:0.2px #222;">05.12.2017</div>
<div class="t" style="right:874.20px;top:314.00px;font-size:12.4px;line-height:12.4px;color:#222;-webkit-text-stroke:0.2px #222;">2017</div>
<div class="t" style="right:782.50px;top:314.00px;font-size:12.4px;line-height:12.4px;color:#222;-webkit-text-stroke:0.2px #222;">12</div>
<div class="t" style="right:690.90px;top:314.00px;font-size:12.4px;line-height:12.4px;color:#222;-webkit-text-stroke:0.2px #222;">12</div>
<div class="t" style="right:548.25px;top:314.00px;font-size:12.4px;line-height:12.4px;color:#222;-webkit-text-stroke:0.2px #222;">2</div>
<div class="t" style="right:966.00px;top:333.58px;font-size:12.4px;line-height:12.4px;color:#222;-webkit-text-stroke:0.2px #222;">06.12.2017</div>
<div class="t" style="right:874.20px;top:333.58px;font-size:12.4px;line-height:12.4px;color:#222;-webkit-text-stroke:0.2px #222;">2017</div>
<div class="t" style="right:782.50px;top:333.58px;font-size:12.4px;line-height:12.4px;color:#222;-webkit-text-stroke:0.2px #222;">12</div>
<div class="t" style="right:690.90px;top:333.58px;font-size:12.4px;line-height:12.4px;color:#222;-webkit-text-stroke:0.2px #222;">12</div>
<div class="t" style="right:548.25px;top:333.58px;font-size:12.4px;line-height:12.4px;color:#222;-webkit-text-stroke:0.2px #222;">6</div>
<div class="t" style="right:966.00px;top:353.16px;font-size:12.4px;line-height:12.4px;color:#222;-webkit-text-stroke:0.2px #222;">07.12.2017</div>
<div class="t" style="right:874.20px;top:353.16px;font-size:12.4px;line-height:12.4px;color:#222;-webkit-text-stroke:0.2px #222;">2017</div>
<div class="t" style="right:782.50px;top:353.16px;font-size:12.4px;line-height:12.4px;color:#222;-webkit-text-stroke:0.2px #222;">12</div>
<div class="t" style="right:690.90px;top:353.16px;font-size:12.4px;line-height:12.4px;color:#222;-webkit-text-stroke:0.2px #222;">12</div>
<div class="t" style="right:548.25px;top:353.16px;font-size:12.4px;line-height:12.4px;color:#222;-webkit-text-stroke:0.2px #222;">2</div>
<div class="t" style="right:966.00px;top:372.74px;font-size:12.4px;line-height:12.4px;color:#222;-webkit-text-stroke:0.2px #222;">08.12.2017</div>
<div class="t" style="right:874.20px;top:372.74px;font-size:12.4px;line-height:12.4px;color:#222;-webkit-text-stroke:0.2px #222;">2017</div>
<div class="t" style="right:782.50px;top:372.74px;font-size:12.4px;line-height:12.4px;color:#222;-webkit-text-stroke:0.2px #222;">12</div>
<div class="t" style="right:690.90px;top:372.74px;font-size:12.4px;line-height:12.4px;color:#222;-webkit-text-stroke:0.2px #222;">12</div>
<div class="t" style="right:548.25px;top:372.74px;font-size:12.4px;line-height:12.4px;color:#222;-webkit-text-stroke:0.2px #222;">45</div>
<div class="t" style="right:966.00px;top:392.32px;font-size:12.4px;line-height:12.4px;color:#222;-webkit-text-stroke:0.2px #222;">09.12.2017</div>
<div class="t" style="right:874.20px;top:392.32px;font-size:12.4px;line-height:12.4px;color:#222;-webkit-text-stroke:0.2px #222;">2017</div>
<div class="t" style="right:782.50px;top:392.32px;font-size:12.4px;line-height:12.4px;color:#222;-webkit-text-stroke:0.2px #222;">12</div>
<div class="t" style="right:690.90px;top:392.32px;font-size:12.4px;line-height:12.4px;color:#222;-webkit-text-stroke:0.2px #222;">12</div>
<div class="t" style="right:548.25px;top:392.32px;font-size:12.4px;line-height:12.4px;color:#222;-webkit-text-stroke:0.2px #222;">52</div>
<div class="t" style="right:966.00px;top:411.90px;font-size:12.4px;line-height:12.4px;color:#222;-webkit-text-stroke:0.2px #222;">10.12.2017</div>
<div class="t" style="right:874.20px;top:411.90px;font-size:12.4px;line-height:12.4px;color:#222;-webkit-text-stroke:0.2px #222;">2017</div>
<div class="t" style="right:782.50px;top:411.90px;font-size:12.4px;line-height:12.4px;color:#222;-webkit-text-stroke:0.2px #222;">12</div>
<div class="t" style="right:690.90px;top:411.90px;font-size:12.4px;line-height:12.4px;color:#222;-webkit-text-stroke:0.2px #222;">12</div>
<div class="t" style="right:548.25px;top:411.90px;font-size:12.4px;line-height:12.4px;color:#222;-webkit-text-stroke:0.2px #222;">110</div>
<div class="t" style="right:966.00px;top:431.48px;font-size:12.4px;line-height:12.4px;color:#222;-webkit-text-stroke:0.2px #222;">11.12.2017</div>
<div class="t" style="right:874.20px;top:431.48px;font-size:12.4px;line-height:12.4px;color:#222;-webkit-text-stroke:0.2px #222;">2017</div>
<div class="t" style="right:782.50px;top:431.48px;font-size:12.4px;line-height:12.4px;color:#222;-webkit-text-stroke:0.2px #222;">12</div>
<div class="t" style="right:690.90px;top:431.48px;font-size:12.4px;line-height:12.4px;color:#222;-webkit-text-stroke:0.2px #222;">12</div>
<div class="t" style="right:548.25px;top:431.48px;font-size:12.4px;line-height:12.4px;color:#222;-webkit-text-stroke:0.2px #222;">64</div>
<div class="r" style="left:533.00px;top:307.00px;width:64.00px;height:22.60px;border:2px solid #217346;box-sizing:border-box"></div>
<div class="r" style="left:591.80px;top:325.20px;width:6.70px;height:6.00px;background:#fff"></div>
<div class="r" style="left:592.80px;top:326.20px;width:5.40px;height:4.80px;background:#217346"></div>
<div class="r" style="left:1062.30px;top:194.20px;width:14.50px;height:362.30px;background:#dcdcdc"></div>
<div class="r" style="left:1062.30px;top:194.20px;width:14.50px;height:14.30px;background:#fff;border:1px solid #c6c6c6;box-sizing:border-box"></div>
<svg class="r" style="left:1065px;top:198px;" width="9" height="6" viewBox="0 0 9 6"><path d="M0.5 5h8l-4-4.5z" fill="#777"/></svg>
<div class="r" style="left:1062.30px;top:208.00px;width:14.50px;height:281.40px;background:#fff;border:1px solid #c6c6c6;box-sizing:border-box"></div>
<div class="r" style="left:1062.30px;top:542.40px;width:14.50px;height:14.10px;background:#fff;border:1px solid #c6c6c6;box-sizing:border-box"></div>
<svg class="r" style="left:1065px;top:547px;" width="9" height="6" viewBox="0 0 9 6"><path d="M0.5 0.5h8l-4 4.5z" fill="#777"/></svg>
<div class="r" style="left:0.00px;top:557.50px;width:1080.00px;height:27.00px;background:#e6e6e6"></div>
<div class="r" style="left:0.00px;top:557.00px;width:1059.00px;height:1.00px;background:#b4b4b4"></div>
<svg class="r" style="left:22px;top:564px" width="10" height="12" viewBox="22 564 10 12"><path d="M29 567v7l-4-3.5z" fill="#c8c8c8"/></svg>
<svg class="r" style="left:50px;top:564px" width="10" height="12" viewBox="50 564 10 12"><path d="M55 567v7l4-3.5z" fill="#c8c8c8"/></svg>
<div class="r" style="left:97.00px;top:557.00px;width:72.00px;height:25.00px;background:#fff;border-left:1px solid #a8a8a8;border-right:1px solid #a8a8a8;box-sizing:border-box"></div>
<div class="r" style="left:97.00px;top:579.40px;width:72.00px;height:2.20px;background:#226b45"></div>
<div class="t" style="left:109.50px;top:564.87px;font-size:11.85px;line-height:11.85px;color:#217346;font-weight:bold;">Arkusz1</div>
<div class="t" style="left:180.50px;top:564.88px;font-size:11.6px;line-height:11.6px;color:#555;">Arkusz2</div>
<div class="r" style="left:237.00px;top:561.00px;width:1.00px;height:19.00px;background:#b4b4b4"></div>
<svg class="r" style="left:270px;top:563px;" width="16" height="16" viewBox="0 0 16 16"><circle cx="8" cy="8" r="6.8" fill="none" stroke="#777" stroke-width="1.3"/><path d="M8 4.2v7.6M4.2 8h7.6" stroke="#777" stroke-width="1.6"/></svg>
<div class="r" style="left:648.30px;top:567.00px;width:1.50px;height:1.50px;background:#a8a8a8"></div>
<div class="r" style="left:648.30px;top:570.50px;width:1.50px;height:1.50px;background:#a8a8a8"></div>
<div class="r" style="left:648.30px;top:574.00px;width:1.50px;height:1.50px;background:#a8a8a8"></div>
<div class="r" style="left:664.40px;top:563.70px;width:392.10px;height:14.50px;background:#dcdcdc"></div>
<div class="r" style="left:664.40px;top:563.70px;width:14.40px;height:14.50px;background:#fff;border:1px solid #c6c6c6;box-sizing:border-box"></div>
<svg class="r" style="left:668px;top:567px;" width="6" height="9" viewBox="0 0 6 9"><path d="M5 0.5v8l-4.5-4z" fill="#777"/></svg>
<div class="r" style="left:678.30px;top:563.70px;width:335.00px;height:14.50px;background:#fff;border:1px solid #c6c6c6;box-sizing:border-box"></div>
<div class="r" style="left:1042.40px;top:563.70px;width:14.10px;height:14.50px;background:#fff;border:1px solid #c6c6c6;box-sizing:border-box"></div>
<svg class="r" style="left:1046px;top:567px;" width="6" height="9" viewBox="0 0 6 9"><path d="M1 0.5v8l4.5-4z" fill="#777"/></svg>
<div class="r" style="left:0.00px;top:584.50px;width:1080.00px;height:21.50px;background:#f3f3f3;border-top:1px solid #d8d8d8;box-sizing:border-box"></div>
<div class="t" style="left:7.00px;top:590.23px;font-size:11.3px;line-height:11.3px;color:#444;">Gotowy</div>
<svg class="r" style="left:79px;top:586px" width="17" height="18" viewBox="79 586 17 18"><circle cx="83.3" cy="590.6" r="2.6" fill="#777"/><path d="M82.5 594.5h10.5v6.5h-10.5z" fill="#fff" stroke="#8a8a8a" stroke-width="0.9"/><path d="M82.5 596.7h10.5M82.5 598.9h10.5M86 594.5v6.5M89.5 594.5v6.5" stroke="#999" stroke-width="0.7"/><path d="M86.5 588.3h6.5v4.5" fill="none" stroke="#8a8a8a" stroke-width="0.9"/></svg>
<div class="r" style="left:784.50px;top:584.70px;width:36.60px;height:21.30px;background:#c8c8c8"></div>
<svg class="r" style="left:793px;top:586px" width="19" height="17" viewBox="793 586 19 17"><path d="M796.5 589.5h12v11h-12z" fill="none" stroke="#707070"/><path d="M796.5 593.2h12M796.5 596.9h12M800.5 589.5v11M804.5 589.5v11" stroke="#707070"/></svg>
<svg class="r" style="left:830px;top:586px" width="20" height="17" viewBox="830 586 20 17"><path d="M833.5 589.5h13v11h-13z" fill="none" stroke="#707070"/><path d="M835.5 589.5v9h9v-9" fill="none" stroke="#707070"/><path d="M837.5 591.5h5M837.5 593.8h5M837.5 596h5" stroke="#808080"/></svg>
<svg class="r" style="left:867px;top:586px" width="20" height="17" viewBox="867 586 20 17"><path d="M870.5 589.5h13v11h-13z" fill="none" stroke="#707070"/><path d="M872.5 589.5v5h8v-5M876.5 589.5v5" fill="none" stroke="#707070"/></svg>
<div class="r" style="left:901.00px;top:594.00px;width:5.50px;height:1.50px;background:#666"></div>
<div class="r" style="left:910.50px;top:594.30px;width:96.50px;height:0.80px;background:#a8a8a8"></div>
<div class="r" style="left:957.00px;top:589.00px;width:4.00px;height:11.00px;background:#666"></div>
<svg class="r" style="left:1011px;top:589px;" width="11" height="11" viewBox="0 0 11 11"><path d="M5.5 0.5v10M0.5 5.5h10" stroke="#666" stroke-width="1.8"/></svg>
<div class="t" style="left:1034.50px;top:590.53px;font-size:10.0px;line-height:10.0px;color:#444;">100%</div>
<div class="r" style="left:621.90px;top:127.60px;width:293.80px;height:152.00px;background:#fff;border:1px solid #c6c6c6;box-sizing:border-box;box-shadow:2px 2px 3px rgba(0,0,0,0.18)"></div>
<div class="r" style="left:622.40px;top:228.30px;width:291.30px;height:49.50px;background:#c6c6c6"></div>
<svg class="r" style="left:630px;top:140.0px;" width="30" height="25" viewBox="0 0 30 25"><rect x="1.5" y="1.5" width="26" height="18.5" fill="#fff" stroke="#8a8a8a"/><path d="M1.5 6.2h26M1.5 10.8h26M1.5 15.4h26M10.2 1.5v18.5M18.8 1.5v18.5" stroke="#a0a0a0" stroke-width="0.9"/><path d="M1.5 20v3.2h8l1.2-3.2M10.2 20v3.2h7.5l1.2-3.2" fill="none" stroke="#8a8a8a" stroke-width="0.9"/><rect x="10.7" y="6.7" width="7.6" height="3.7" fill="#3d6fb6"/><path d="M2.5 5.5l7-3.5M11 5.5l7-3.5M19.5 5.5l7-3.5M2.5 10l7-3.5M2.5 14.6l7-3.5" stroke="#aab6c6" stroke-width="0.9"/></svg>
<div class="t" style="left:674.50px;top:132.93px;font-size:11.3px;line-height:11.3px;color:#4a4a4a;font-weight:bold;"><u>O</u>dblokuj okienka</div>
<div class="t" style="left:674.50px;top:150.03px;font-size:11.3px;line-height:11.3px;color:#5c5c5c;">Odblokuj wszystkie wiersze i kolumny do</div>
<div class="t" style="left:674.50px;top:164.83px;font-size:11.3px;line-height:11.3px;color:#5c5c5c;">przewijania całego arkusza.</div>
<svg class="r" style="left:630px;top:189.6px;" width="30" height="25" viewBox="0 0 30 25"><rect x="1.5" y="1.5" width="26" height="18.5" fill="#fff" stroke="#8a8a8a"/><path d="M1.5 6.2h26M1.5 10.8h26M1.5 15.4h26M10.2 1.5v18.5M18.8 1.5v18.5" stroke="#a0a0a0" stroke-width="0.9"/><path d="M1.5 20v3.2h8l1.2-3.2M10.2 20v3.2h7.5l1.2-3.2" fill="none" stroke="#8a8a8a" stroke-width="0.9"/><path d="M2.5 5.5l7-3.5M11 5.5l7-3.5M19.5 5.5l7-3.5" stroke="#aab6c6" stroke-width="0.9"/></svg>
<div class="t" style="left:674.50px;top:182.53px;font-size:11.3px;line-height:11.3px;color:#4a4a4a;font-weight:bold;">Zablokuj górny <u>w</u>iersz</div>
<div class="t" style="left:674.50px;top:199.76px;font-size:11.15px;line-height:11.15px;color:#5c5c5c;">Podczas przewijania pozostałej części arkusza</div>
<div class="t" style="left:674.50px;top:214.43px;font-size:11.3px;line-height:11.3px;color:#5c5c5c;">zachowaj w polu widzenia górny wiersz.</div>
<svg class="r" style="left:630px;top:239.2px;" width="30" height="25" viewBox="0 0 30 25"><rect x="1.5" y="1.5" width="26" height="18.5" fill="#fff" stroke="#8a8a8a"/><path d="M1.5 6.2h26M1.5 10.8h26M1.5 15.4h26M10.2 1.5v18.5M18.8 1.5v18.5" stroke="#a0a0a0" stroke-width="0.9"/><path d="M1.5 20v3.2h8l1.2-3.2M10.2 20v3.2h7.5l1.2-3.2" fill="none" stroke="#8a8a8a" stroke-width="0.9"/><path d="M2.5 5.5l7-3.5M2.5 10l7-3.5M2.5 14.6l7-3.5M2.5 19.2l7-3.5" stroke="#aab6c6" stroke-width="0.9"/></svg>
<div class="t" style="left:674.50px;top:232.13px;font-size:11.3px;line-height:11.3px;color:#4a4a4a;font-weight:bold;">Zablokuj <u>p</u>ierwszą kolumnę</div>
<div class="t" style="left:674.50px;top:249.36px;font-size:11.15px;line-height:11.15px;color:#5c5c5c;">Podczas przewijania pozostałej części arkusza</div>
<div class="t" style="left:674.50px;top:264.03px;font-size:11.3px;line-height:11.3px;color:#5c5c5c;">zachowaj w polu widzenia pierwszą kolumnę.</div>
</body></html>
